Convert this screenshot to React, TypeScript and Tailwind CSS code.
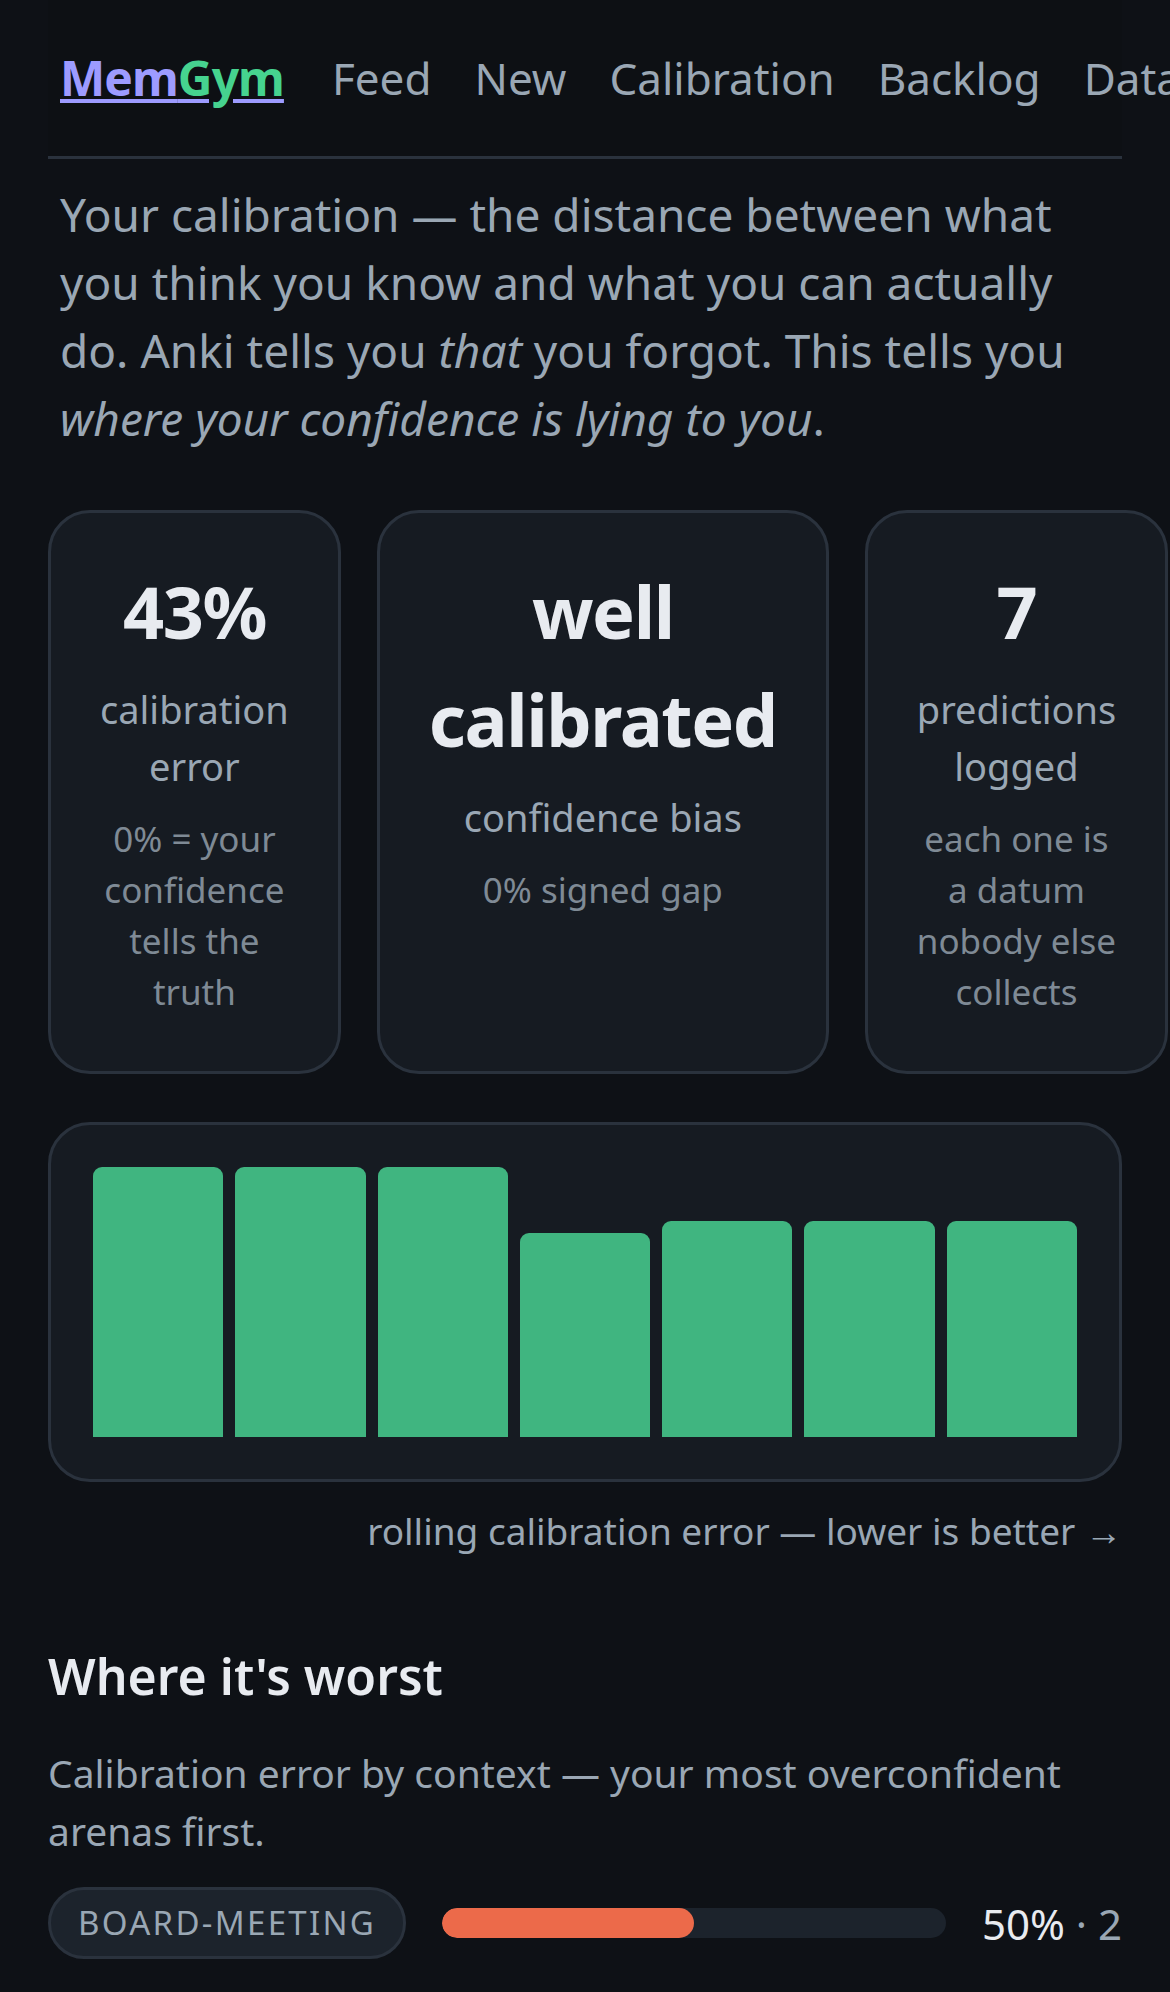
const links = ['Feed', 'New', 'Calibration', 'Backlog', 'Data'];

const stats = [
  { value: '43%', label: 'calibration error', hint: '0% = your confidence tells the truth' },
  { value: 'well calibrated', label: 'confidence bias', hint: '0% signed gap' },
  { value: '7', label: 'predictions logged', hint: 'each one is a datum nobody else collects' },
];

// bar heights in percent of the plot area
const history = [100, 100, 100, 75.6, 80, 80, 80];

const contexts = [{ name: 'board-meeting', error: 50, count: 2 }];

// ---------- Header ----------
function Header() {
  return (
    <header className="flex items-center gap-12 border-b-3 border-[#2a323d] bg-[#0d1014] px-3 py-[42px] whitespace-nowrap">
      <a
        href="/"
        className="text-[48px] leading-[72px] font-bold tracking-[-0.02em] text-[#9d9bff] underline"
      >
        Mem<span className="text-[#46d38f]">Gym</span>
      </a>
      <nav className="flex gap-[43px] text-[44px] leading-[66px] text-[#9aa7b4]">
        {links.map((link) => (
          <a key={link} href={`/${link.toLowerCase()}`}>
            {link}
          </a>
        ))}
      </nav>
    </header>
  );
}

// ---------- Stat cards ----------
type StatProps = { value: string; label: string; hint: string };

function Stat({ value, label, hint }: StatProps) {
  return (
    <div className="flex-1 rounded-[42px] border-3 border-[#2a323d] bg-[#161b22] px-[49px] pt-11 pb-[54px] text-center">
      <div className="text-[72px] leading-[108px] font-bold tracking-[-0.02em] text-[#e8ebf0]">
        {value}
      </div>
      <div className="mt-4 text-[38px] leading-[57px] text-[#9aa7b4]">{label}</div>
      <div className="mt-[18px] text-[35px] leading-[51px] text-[#7f8a95]">{hint}</div>
    </div>
  );
}

// ---------- Rolling error chart ----------
function Chart() {
  return (
    <div className="rounded-[42px] border-3 border-[#2a323d] bg-[#161b22] p-[42px]">
      <div className="flex h-[270px] items-end gap-3">
        {history.map((h, i) => (
          <div key={i} className="flex-1 rounded-t-[9px] bg-[#40b580]" style={{ height: `${h}%` }} />
        ))}
      </div>
    </div>
  );
}

type ContextRowProps = { name: string; error: number; count: number };

function ContextRow({ name, error, count }: ContextRowProps) {
  return (
    <li className="flex items-center gap-9">
      <span className="rounded-full border-3 border-[#2a323d] bg-[#1c232c] px-[27px] py-[9px] text-[33px] leading-[48px] tracking-[0.07em] text-[#9aa7b4] uppercase">
        {name}
      </span>
      <div className="h-[30px] flex-1 overflow-hidden rounded-full bg-[#1c232c]">
        <div className="h-full rounded-full bg-[#ec6a4a]" style={{ width: `${error}%` }} />
      </div>
      <span className="text-[42px] leading-[63px] text-[#9aa7b4]">
        <span className="text-[#e8ebf0]">{error}%</span> · {count}
      </span>
    </li>
  );
}

export default function App() {
  return (
    <div className="min-h-screen overflow-x-hidden bg-[#0e1116] px-12 pb-6 font-['Noto_Sans',sans-serif] text-[#e8ebf0]">
      <Header />
      <main>
        <p className="px-3 pt-[21px] text-[46px] leading-[68px] text-[#9aa7b4]">
          Your calibration — the distance between what you think you know and what you can actually
          do. Anki tells you <em>that</em> you forgot. This tells you{' '}
          <em>where your confidence is lying to you</em>.
        </p>

        <section className="mt-[58px] flex gap-9">
          {stats.map((s) => (
            <Stat key={s.label} {...s} />
          ))}
        </section>

        <section className="mt-12">
          <Chart />
          <p className="mt-5 text-right text-[37px] leading-[57px] text-[#9aa7b4]">
            rolling calibration error — lower is better →
          </p>
        </section>

        <section className="mt-20">
          <h2 className="text-[50px] leading-[75px] font-semibold">Where it's worst</h2>
          <p className="mt-[30px] text-[39px] leading-[58px] text-[#9aa7b4]">
            Calibration error by context — your most overconfident arenas first.
          </p>
          <ul className="mt-[27px]">
            {contexts.map((c) => (
              <ContextRow key={c.name} {...c} />
            ))}
          </ul>
        </section>
      </main>
    </div>
  );
}
